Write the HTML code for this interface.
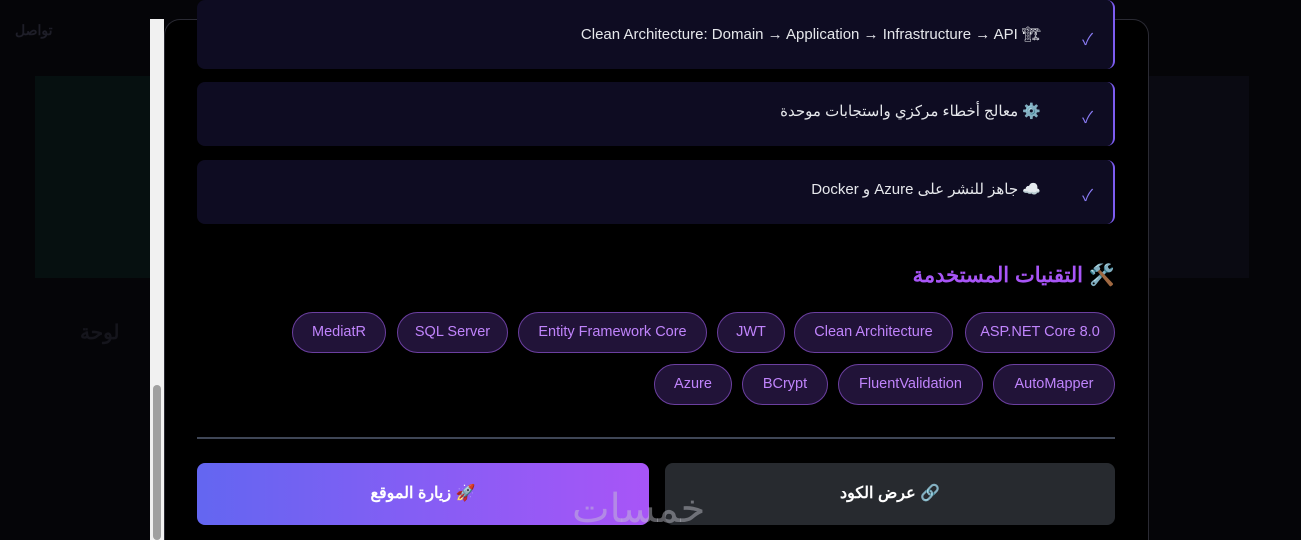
<!DOCTYPE html>
<html><head><meta charset="utf-8"><style>
*{margin:0;padding:0;box-sizing:border-box}
html,body{width:1301px;height:540px;overflow:hidden}
body{background:#050508;font-family:"Liberation Sans","Noto Sans CJK SC",sans-serif;position:relative}
.a{position:absolute}
.card{position:absolute;top:76px;height:202px}
.item{position:absolute;left:197px;width:918px;background:#0e0c22;border-right:2px solid #7c5cf0;border-radius:8px;direction:rtl;color:#e5e7eb;font-size:15px}
.item .ck{position:absolute;right:20px;color:#8b7cf6;font-size:16px}
.item .t{position:absolute;right:72px}
.tag{position:absolute;height:41px;border:1px solid #6b3fa0;background:#211338;border-radius:21px;color:#c084fc;font-size:14.5px;line-height:39px;text-align:center}
</style></head><body>
<div class="card" style="left:35px;width:382px;background:#061010"></div>
<div class="card" style="left:450px;width:383px;background:#0e080b"></div>
<div class="card" style="left:867px;width:382px;background:#0a0a12"></div>
<div class="a" style="left:15px;top:22px;color:#1e1e28;font-size:14px;font-weight:bold">تواصل</div>
<div class="a" style="left:80px;top:320px;color:#15151c;font-size:20px;font-weight:bold">لوحة</div>
<div class="a" style="left:150px;top:19px;width:14px;height:521px;background:#f1f1f1"></div>
<div class="a" style="left:153px;top:385px;width:8px;height:155px;background:#a0a0a0;border-radius:4px"></div>
<div class="a" style="left:164px;top:19px;width:985px;height:521px;background:#000;border:1px solid #2a2a33;border-bottom:none;border-radius:16px 16px 0 0"></div>
<div class="item" style="top:0;height:69px"><span class="ck" style="top:26px">✓</span><span class="t" style="top:25px">🏗 Clean Architecture: Domain → Application → Infrastructure → API</span></div>
<div class="item" style="top:82px;height:64px"><span class="ck" style="top:22px">✓</span><span class="t" style="top:20px">⚙️ معالج أخطاء مركزي واستجابات موحدة</span></div>
<div class="item" style="top:160px;height:64px"><span class="ck" style="top:22px">✓</span><span class="t" style="top:20px">☁️ جاهز للنشر على Azure و Docker</span></div>
<div class="a" style="right:186px;top:263px;color:#a855f7;font-size:21px;font-weight:bold;direction:rtl">🛠️ التقنيات المستخدمة</div>
<div class="tag" style="left:965px;top:312px;width:150px">ASP.NET Core 8.0</div>
<div class="tag" style="left:794px;top:312px;width:159px">Clean Architecture</div>
<div class="tag" style="left:717px;top:312px;width:68px">JWT</div>
<div class="tag" style="left:518px;top:312px;width:189px">Entity Framework Core</div>
<div class="tag" style="left:397px;top:312px;width:111px">SQL Server</div>
<div class="tag" style="left:292px;top:312px;width:94px">MediatR</div>
<div class="tag" style="left:993px;top:364px;width:122px">AutoMapper</div>
<div class="tag" style="left:838px;top:364px;width:145px">FluentValidation</div>
<div class="tag" style="left:742px;top:364px;width:86px">BCrypt</div>
<div class="tag" style="left:654px;top:364px;width:78px">Azure</div>
<div class="a" style="left:197px;top:437px;width:918px;height:2px;background:#3f4656"></div>
<div class="a" style="left:197px;top:463px;width:452px;height:62px;border-radius:8px;background:linear-gradient(90deg,#6366f1,#a855f7);color:#fff;font-weight:bold;font-size:16px;line-height:62px;text-align:center;direction:rtl">🚀 زيارة الموقع</div>
<div class="a" style="left:665px;top:463px;width:450px;height:62px;border-radius:8px;background:#272a2f;color:#fff;font-weight:bold;font-size:16px;line-height:62px;text-align:center;direction:rtl">🔗 عرض الكود</div>
<div class="a" style="left:572px;top:486px;color:rgba(200,200,210,.45);font-size:40px;direction:rtl">خمسات</div>
</body></html>
